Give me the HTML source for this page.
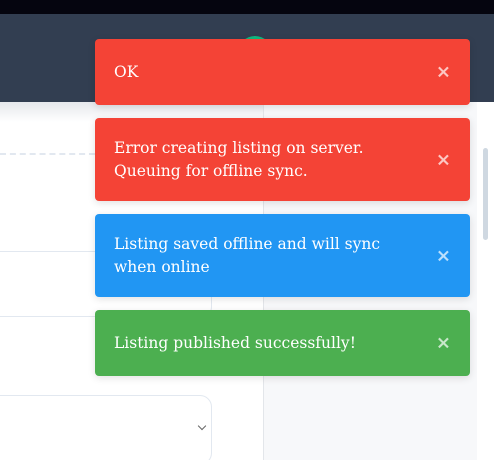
<!DOCTYPE html>
<html><head><meta charset="utf-8"><style>
*{margin:0;padding:0;box-sizing:border-box}
html,body{width:494px;height:460px;overflow:hidden;background:#fff;position:relative}
.top{position:absolute;left:0;top:0;width:494px;height:14px;background:#05050f}
.hdr{position:absolute;left:0;top:14px;width:494px;height:88px;background:#323e51}
.dot{position:absolute;left:238px;top:36px;width:34px;height:34px;border-radius:50%;background:#10b981}
.shade{position:absolute;left:0;top:102px;width:477px;height:20px;background:linear-gradient(#e6e8ec,#fff)}
.right{position:absolute;left:263px;top:102px;width:214px;height:358px;background:#f7f8fa;border-left:1px solid #e3e6ea}
.sb{position:absolute;left:477px;top:102px;width:17px;height:358px;background:#fff}
.thumb{position:absolute;left:483px;top:148px;width:5px;height:92px;border-radius:3px;background:#cfd8e1}
.dash{position:absolute;left:0;top:153px;width:95px;border-top:2px dashed #e2e8f0}
.in1{position:absolute;left:-20px;top:251px;width:232px;height:66px;border:1.5px solid #e2e8f0;border-radius:10px}
.sel{position:absolute;left:-20px;top:395px;width:232px;height:70px;border:1.5px solid #e2e8f0;border-radius:12px}
.chev{position:absolute;left:199px;top:423px;width:6px;height:6px;border-right:1.5px solid #666;border-bottom:1.5px solid #666;transform:rotate(45deg)}
.t{position:absolute;left:95px;width:375px;border-radius:4px;color:#fff;font-family:"DejaVu Serif",serif;font-size:15.5px;line-height:23px;padding:0 60px 0 19px;display:flex;align-items:center;box-shadow:0 2px 8px rgba(0,0,0,.12);white-space:nowrap}
.t .x{position:absolute;right:19px;top:50%;transform:translateY(-50%);font:bold 18px "DejaVu Sans",sans-serif;color:rgba(255,255,255,.7)}
.r{background:#f44336}.b{background:#2196f3}.g{background:#4caf50}
</style></head><body>
<div class="top"></div>
<div class="hdr"></div>
<div class="dot"></div>
<div class="shade"></div>
<div class="right"></div>
<div class="sb"></div>
<div class="thumb"></div>
<div class="dash"></div>
<div class="in1"></div>
<div class="sel"></div>
<div class="chev"></div>
<div class="t r" style="top:39px;height:66px">OK<span class="x">×</span></div>
<div class="t r" style="top:118px;height:83px">Error creating listing on server.<br>Queuing for offline sync.<span class="x">×</span></div>
<div class="t b" style="top:214px;height:83px">Listing saved offline and will sync<br>when online<span class="x">×</span></div>
<div class="t g" style="top:310px;height:66px">Listing published successfully!<span class="x">×</span></div>
</body></html>
